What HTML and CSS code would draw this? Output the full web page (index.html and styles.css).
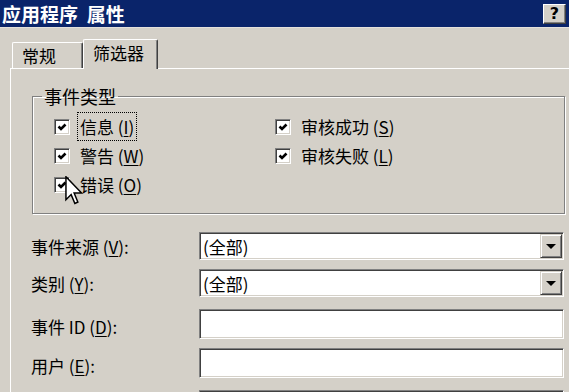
FILE: index.html
```html
<!DOCTYPE html>
<html lang="zh-CN">
<head>
    <meta charset="UTF-8">
    <title>应用程序 属性</title>
    <link rel="stylesheet" href="styles.css">
</head>
<body>

    <div class="window">
        <div class="titlebar">
            <span class="title">应用程序  属性</span>
            <button class="help">?</button>
        </div>

        <div class="content">
            <div class="tabs">
                <div class="tab">常规</div>
                <div class="tab active">筛选器</div>
            </div>

            <div class="panel">
                <fieldset class="group">
                    <legend>事件类型</legend>
                    <div class="checks">
                        <div class="check"><span class="box"><svg viewBox="0 0 12 12"><path d="M2.5 5.5 L5 8 L9.5 3.5"/></svg></span><span class="focus">信息 (<u>I</u>)</span></div>
                        <div class="check"><span class="box"><svg viewBox="0 0 12 12"><path d="M2.5 5.5 L5 8 L9.5 3.5"/></svg></span><span>审核成功 (<u>S</u>)</span></div>
                        <div class="check"><span class="box"><svg viewBox="0 0 12 12"><path d="M2.5 5.5 L5 8 L9.5 3.5"/></svg></span><span>警告 (<u>W</u>)</span></div>
                        <div class="check"><span class="box"><svg viewBox="0 0 12 12"><path d="M2.5 5.5 L5 8 L9.5 3.5"/></svg></span><span>审核失败 (<u>L</u>)</span></div>
                        <div class="check"><span class="box"><svg viewBox="0 0 12 12"><path d="M2.5 5.5 L5 8 L9.5 3.5"/></svg></span><span>错误 (<u>O</u>)</span></div>
                    </div>
                </fieldset>

                <div class="fields">
                    <div class="field">
                        <label>事件来源 (<u>V</u>):</label>
                        <div class="combo"><span>(全部)</span><span class="drop"><i></i></span></div>
                    </div>
                    <div class="field">
                        <label>类别 (<u>Y</u>):</label>
                        <div class="combo"><span>(全部)</span><span class="drop"><i></i></span></div>
                    </div>
                    <div class="field wide-gap">
                        <label class="low">事件 ID (<u>D</u>):</label>
                        <div class="edit"></div>
                    </div>
                    <div class="field">
                        <label class="low">用户 (<u>E</u>):</label>
                        <div class="edit"></div>
                    </div>
                    <div class="field wide-gap">
                        <label></label>
                        <div class="edit"></div>
                    </div>
                </div>
            </div>
        </div>

        <svg class="cursor" width="19" height="29" viewBox="0 0 12.5 19.5">
            <path d="M0.5 0.5 L0.5 16 L4 12.5 L6.5 18.5 L8.5 17.5 L6 11.5 L11 11.5 Z"/>
        </svg>
    </div>

</body>
</html>
```

FILE: styles.css
```css
body {
    margin: 0;
    background-color: #d4d0c8;
    font-family: "Noto Sans CJK SC", "Liberation Sans", sans-serif;
    font-size: 17px;
    color: #000;
    overflow: hidden;
}

.window {
    position: relative;
    width: 569px;
    height: 392px;
    overflow: hidden;
}

/* barra de título */
.titlebar {
    height: 27px;
    background-color: #0a246a;
    display: flex;
    align-items: center;
    justify-content: space-between;
    padding: 0 3px 0 2px;
    border-bottom: 1px solid #e4e1dc;
}
.title {
    color: #fff;
    font-weight: bold;
    font-size: 19px;
    line-height: 27px;
    white-space: pre;
}
.help {
    width: 23px;
    height: 20px;
    padding: 0;
    margin-top: 1px;
    background-color: #d4d0c8;
    border: 1px solid;
    border-color: #fff #404040 #404040 #fff;
    box-shadow: inset -1px -1px #808080;
    font: bold 16px "DejaVu Sans", sans-serif;
    line-height: 16px;
    color: #000;
}

.content {
    padding: 11px 0 0 10px;
}

/* pestañas */
.tabs {
    display: flex;
    align-items: flex-end;
    height: 30px;
    padding-left: 2px;
}
.tab {
    box-sizing: border-box;
    height: 26px;
    width: 71px;
    margin-bottom: 1px;
    padding-left: 9px;
    line-height: 25px;
    border-top: 1px solid #fff;
    border-left: 1px solid #fff;
    border-right: 1px solid #404040;
    border-radius: 2px 2px 0 0;
    box-shadow: inset -1px 0 #808080;
}
.tab.active {
    position: relative;
    height: 30px;
    width: 75px;
    margin-bottom: 0;
    padding-left: 9px;
    line-height: 26px;
    background-color: #d4d0c8;
}

.panel {
    margin-top: -1px;
    border-top: 1px solid #fff;
    border-left: 1px solid #fff;
    height: 400px;
}

/* grupo tipos de evento */
.group {
    box-sizing: border-box;
    width: 533px;
    margin: 17px 0 0 21px;
    padding: 0;
    border: 1px solid #808080;
    box-shadow: inset 1px 1px #fff, 1px 1px #fff;
}
.group legend {
    margin-left: 9px;
    padding: 0 2px;
    line-height: 20px;
    font-size: 18px;
}
.checks {
    display: grid;
    grid-template-columns: 221px 1fr;
    grid-auto-rows: 29px;
    padding: 6px 0 14px 21px;
}
.check {
    display: flex;
    align-items: center;
    gap: 10px;
}
.box {
    box-sizing: border-box;
    width: 16px;
    height: 16px;
    background-color: #fff;
    border: 1px solid;
    border-color: #808080 #fff #fff #808080;
    box-shadow: inset 1px 1px #404040, inset -1px -1px #d4d0c8;
    display: flex;
    align-items: center;
    justify-content: center;
}
.box svg {
    width: 12px;
    height: 12px;
    fill: none;
    stroke: #000;
    stroke-width: 2.6;
}
.focus {
    outline: 1px dotted #000;
    outline-offset: 1px;
    padding: 0 1px;
    margin-left: -1px;
}
u {
    text-decoration-thickness: 1px;
    text-underline-offset: 2px;
}

/* campos */
.fields {
    display: flex;
    flex-direction: column;
    gap: 9px;
    margin-top: 18px;
    padding-left: 20px;
}
.field {
    display: flex;
    align-items: center;
}
.field.wide-gap {
    margin-top: 3px;
}
.field label {
    width: 168px;
}
.field label.low {
    padding-top: 5px;
}
.combo, .edit {
    box-sizing: border-box;
    width: 365px;
    background-color: #fff;
    border: 1px solid;
    border-color: #808080 #fff #fff #808080;
    box-shadow: inset 1px 1px #404040, inset -1px -1px #d4d0c8;
}
.combo {
    height: 28px;
    padding: 1px;
    display: flex;
    justify-content: space-between;
    align-items: center;
}
.combo span:first-child {
    padding-left: 2px;
}
.edit {
    height: 30px;
}
.drop {
    box-sizing: border-box;
    width: 22px;
    height: 24px;
    background-color: #d4d0c8;
    border: 1px solid;
    border-color: #d4d0c8 #404040 #404040 #d4d0c8;
    box-shadow: inset 1px 1px #fff, inset -1px -1px #808080;
    display: flex;
    align-items: center;
    justify-content: center;
}
.drop i {
    width: 0;
    height: 0;
    border-left: 5px solid transparent;
    border-right: 5px solid transparent;
    border-top: 5px solid #000;
}

/* puntero del ratón */
.cursor {
    position: absolute;
    left: 65px;
    top: 176px;
    fill: #fff;
    stroke: #000;
    stroke-width: 1;
    stroke-linejoin: miter;
}
```
